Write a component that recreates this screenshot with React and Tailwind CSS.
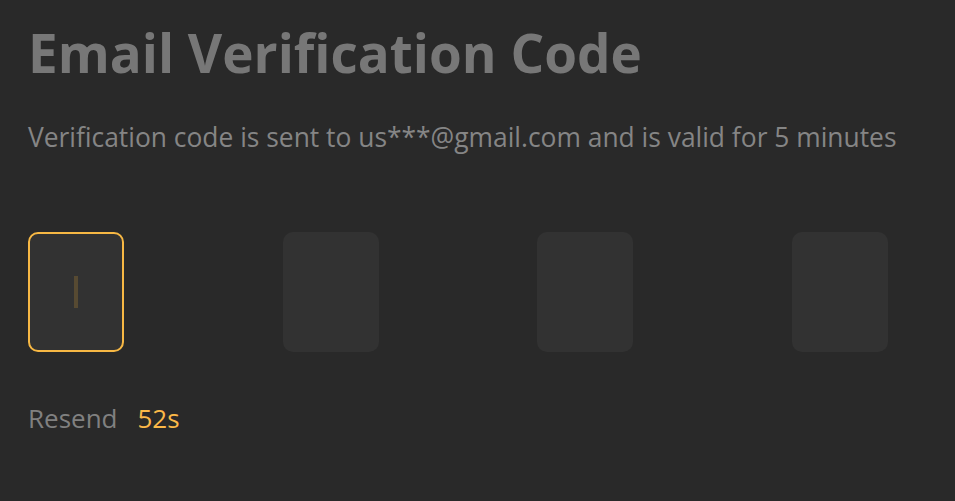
export default function App() {
  const boxes = [0, 1, 2, 3];
  return (
    <div className="min-h-screen bg-[#292929] px-[28px] pt-[18px]" style={{ fontFamily: '"Open Sans", "Noto Sans", sans-serif' }}>
      <div className="w-[860px]">
        <h1 className="text-[53px] font-bold leading-[70px] text-[#777777]">Email Verification Code</h1>
        <p className="mt-[31px] whitespace-nowrap text-[26.4px] leading-[36px] text-[#858585]">
          Verification code is sent to us***@gmail.com and is valid for 5 minutes
        </p>
        <div className="mt-[77px] flex justify-between">
          {boxes.map((i) => (
            <div
              key={i}
              className={
                i === 0
                  ? 'flex h-[120px] w-[96px] items-center justify-center rounded-[10px] border-2 border-[#f7b844] bg-[#323232]'
                  : 'flex h-[120px] w-[96px] items-center justify-center rounded-[10px] bg-[#323232]'
              }
            >
              {i === 0 && <span className="block h-[32px] w-[4px] bg-[#574a32]" />}
            </div>
          ))}
        </div>
        <div className="mt-[48px] flex items-center gap-[20px] text-[26px] leading-[36px]">
          <span className="text-[#808080]">Resend</span>
          <span className="text-[#fbb848]">52s</span>
        </div>
      </div>
    </div>
  );
}
